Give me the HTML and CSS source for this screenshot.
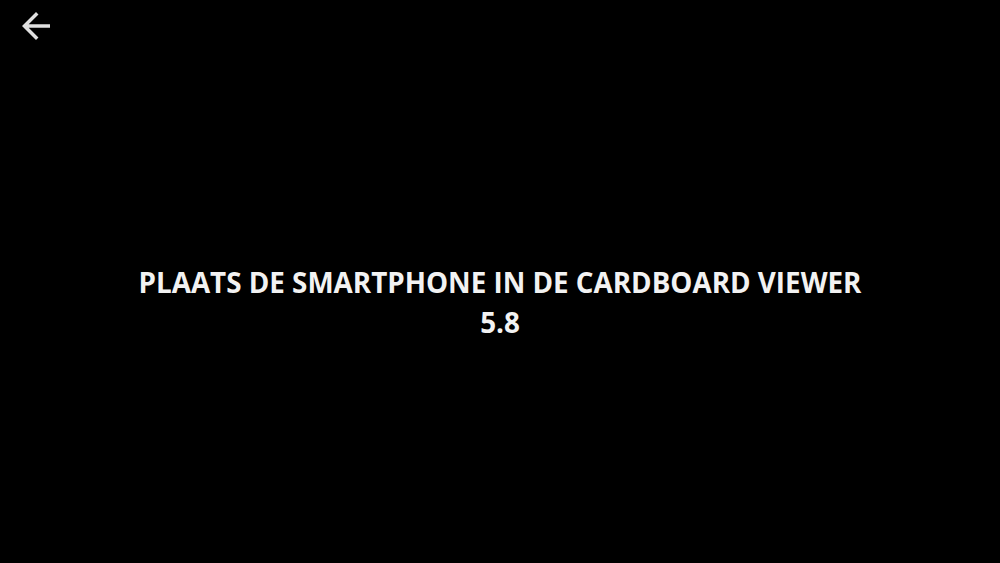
FILE: index.html
```html
<!DOCTYPE html>
<html lang="nl">
<head>
<meta charset="utf-8">
<title>Cardboard</title>
<link rel="stylesheet" href="styles.css">
</head>
<body>
<div class="screen">
  <header class="topbar">
    <button class="back" aria-label="Terug">
      <svg viewBox="0 0 24 24" width="42" height="42"><path d="M20 11H7.83l5.59-5.59L12 4l-8 8 8 8 1.41-1.41L7.83 13H20v-2z" fill="currentColor"/></svg>
    </button>
  </header>
  <main class="message">
    <p class="line">PLAATS DE SMARTPHONE IN DE CARDBOARD VIEWER</p>
    <p class="line">5.8</p>
  </main>
</div>
</body>
</html>
```
FILE: styles.css
```css
html, body {
  margin: 0;
  padding: 0;
  background: #000;
}
.screen {
  width: 1000px;
  height: 563px;
  display: flex;
  flex-direction: column;
  font-family: "Open Sans", "Liberation Sans", sans-serif;
  color: #f2f2f2;
}
.topbar {
  height: 50px;
  padding: 5px 0 0 15px;
  box-sizing: border-box;
}
.back {
  display: block;
  background: none;
  border: 0;
  padding: 0;
  width: 42px;
  height: 42px;
  color: #e0e0e0;
}
.back svg { display: block; }
.message {
  padding-top: 212px;
  text-align: center;
}
.line {
  margin: 0;
  font-size: 27.8px;
  font-weight: 700;
  line-height: 40px;
}
```
